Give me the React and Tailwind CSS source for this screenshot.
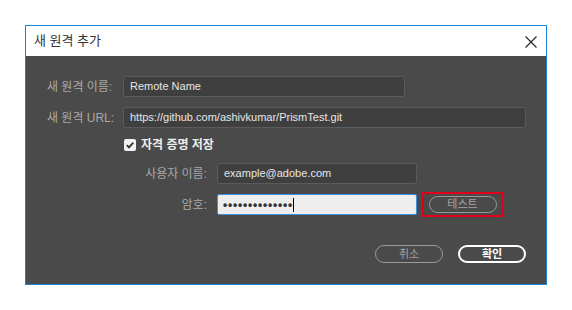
export default function App() {
  const font = { fontFamily: '"Liberation Sans", "Noto Sans CJK KR", sans-serif' };
  return (
    <div className="w-[572px] h-[310px] bg-white pt-[25px] pl-[25px]" style={font}>
      <div className="w-[522px] h-[260px] border border-[#1a84d8] flex flex-col">
        <div className="h-[30px] bg-white flex items-center justify-between pl-[8px] pr-[9px]">
          <span className="text-[13px] text-[#333]">새 원격 추가</span>
          <svg width="12" height="12" viewBox="0 0 12 12" className="mt-[1px]">
            <path d="M0.5 0.5 L11.5 11.5 M11.5 0.5 L0.5 11.5" stroke="#222" strokeWidth="1.1" />
          </svg>
        </div>
        <div className="flex-1 bg-[#4a4a4a] flex flex-col pt-[20px] text-[12px]">
          <div className="flex items-center h-[21px] pl-[21px]">
            <span className="w-[76px] text-[#a9a9a9] leading-none">새 원격 이름:</span>
            <div className="w-[282px] h-[21px] rounded-[3px] bg-[#3f3f3f] border border-[#5b5b5b] flex items-center pl-[6px] text-[#e6e6e6] text-[11px]">
              Remote Name
            </div>
          </div>
          <div className="flex items-center h-[21px] pl-[21px] mt-[10px]">
            <span className="w-[76px] text-[#a9a9a9] leading-none">새 원격 URL:</span>
            <div className="w-[403px] h-[21px] rounded-[3px] bg-[#3f3f3f] border border-[#5b5b5b] flex items-center pl-[6px] text-[#e6e6e6] text-[11px]">
              https://github.com/ashivkumar/PrismTest.git
            </div>
          </div>
          <div className="flex items-center h-[14px] mt-[10px] pl-[98px]">
            <div className="w-[12px] h-[12px] bg-[#f2f2f2] rounded-[2px] flex items-center justify-center">
              <svg width="10" height="10" viewBox="0 0 10 10">
                <path d="M1.8 5.2 L4 7.4 L8.3 2.6" stroke="#333" strokeWidth="1.8" fill="none" />
              </svg>
            </div>
            <span className="ml-[5px] text-[#eeeeee] font-bold leading-none">자격 증명 저장</span>
          </div>
          <div className="flex items-center h-[21px] mt-[11px]">
            <span className="w-[181px] text-right text-[#a9a9a9] leading-none">사용자 이름:</span>
            <div className="ml-[10px] w-[200px] h-[21px] rounded-[3px] bg-[#3f3f3f] border border-[#5b5b5b] flex items-center pl-[6px] text-[#e6e6e6] text-[11px]">
              example@adobe.com
            </div>
          </div>
          <div className="flex items-center h-[21px] mt-[10px]">
            <span className="w-[181px] text-right text-[#a9a9a9] leading-none">암호:</span>
            <div className="ml-[10px] w-[200px] h-[21px] rounded-[2px] bg-[#eeeeee] border border-[#3d8fe0] flex items-center pl-[5px] text-[#333]">
              <span className="text-[12px] tracking-[0.8px] leading-none font-bold">••••••••••••••</span>
              <span className="w-[1px] h-[14px] bg-black"></span>
            </div>
            <div className="ml-[5px] border-2 border-[#e0001b] w-[81px] h-[25px] flex items-center justify-center">
              <div className="w-[68px] h-[17px] rounded-full border border-[#999] flex items-center justify-center text-[#a5a5a5] text-[11px] leading-none">
                테스트
              </div>
            </div>
          </div>
          <div className="flex justify-end gap-[15px] pr-[20px] mt-[30px]">
            <div className="w-[68px] h-[18px] rounded-full border border-[#9a9a9a] flex items-center justify-center text-[#a5a5a5] text-[11px] leading-none">
              취소
            </div>
            <div className="w-[68px] h-[18px] rounded-full border-2 border-white flex items-center justify-center text-white font-bold text-[11px] leading-none">
              확인
            </div>
          </div>
        </div>
      </div>
    </div>
  );
}
